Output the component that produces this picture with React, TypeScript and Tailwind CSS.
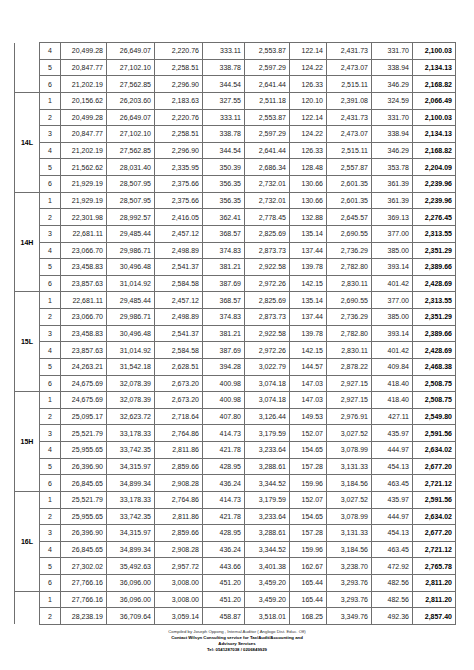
import React from 'react';

type Row = [string, string[]];
type Group = { label: string; rows: Row[] };

const r = (n: string, line: string): Row => [n, line.split(' ')];

const groups: Group[] = [
  {
    label: '',
    rows: [
      r('4', '20,499.28 26,649.07 2,220.76 333.11 2,553.87 122.14 2,431.73 331.70 2,100.03'),
      r('5', '20,847.77 27,102.10 2,258.51 338.78 2,597.29 124.22 2,473.07 338.94 2,134.13'),
      r('6', '21,202.19 27,562.85 2,296.90 344.54 2,641.44 126.33 2,515.11 346.29 2,168.82'),
    ],
  },
  {
    label: '14L',
    rows: [
      r('1', '20,156.62 26,203.60 2,183.63 327.55 2,511.18 120.10 2,391.08 324.59 2,066.49'),
      r('2', '20,499.28 26,649.07 2,220.76 333.11 2,553.87 122.14 2,431.73 331.70 2,100.03'),
      r('3', '20,847.77 27,102.10 2,258.51 338.78 2,597.29 124.22 2,473.07 338.94 2,134.13'),
      r('4', '21,202.19 27,562.85 2,296.90 344.54 2,641.44 126.33 2,515.11 346.29 2,168.82'),
      r('5', '21,562.62 28,031.40 2,335.95 350.39 2,686.34 128.48 2,557.87 353.78 2,204.09'),
      r('6', '21,929.19 28,507.95 2,375.66 356.35 2,732.01 130.66 2,601.35 361.39 2,239.96'),
    ],
  },
  {
    label: '14H',
    rows: [
      r('1', '21,929.19 28,507.95 2,375.66 356.35 2,732.01 130.66 2,601.35 361.39 2,239.96'),
      r('2', '22,301.98 28,992.57 2,416.05 362.41 2,778.45 132.88 2,645.57 369.13 2,276.45'),
      r('3', '22,681.11 29,485.44 2,457.12 368.57 2,825.69 135.14 2,690.55 377.00 2,313.55'),
      r('4', '23,066.70 29,986.71 2,498.89 374.83 2,873.73 137.44 2,736.29 385.00 2,351.29'),
      r('5', '23,458.83 30,496.48 2,541.37 381.21 2,922.58 139.78 2,782.80 393.14 2,389.66'),
      r('6', '23,857.63 31,014.92 2,584.58 387.69 2,972.26 142.15 2,830.11 401.42 2,428.69'),
    ],
  },
  {
    label: '15L',
    rows: [
      r('1', '22,681.11 29,485.44 2,457.12 368.57 2,825.69 135.14 2,690.55 377.00 2,313.55'),
      r('2', '23,066.70 29,986.71 2,498.89 374.83 2,873.73 137.44 2,736.29 385.00 2,351.29'),
      r('3', '23,458.83 30,496.48 2,541.37 381.21 2,922.58 139.78 2,782.80 393.14 2,389.66'),
      r('4', '23,857.63 31,014.92 2,584.58 387.69 2,972.26 142.15 2,830.11 401.42 2,428.69'),
      r('5', '24,263.21 31,542.18 2,628.51 394.28 3,022.79 144.57 2,878.22 409.84 2,468.38'),
      r('6', '24,675.69 32,078.39 2,673.20 400.98 3,074.18 147.03 2,927.15 418.40 2,508.75'),
    ],
  },
  {
    label: '15H',
    rows: [
      r('1', '24,675.69 32,078.39 2,673.20 400.98 3,074.18 147.03 2,927.15 418.40 2,508.75'),
      r('2', '25,095.17 32,623.72 2,718.64 407.80 3,126.44 149.53 2,976.91 427.11 2,549.80'),
      r('3', '25,521.79 33,178.33 2,764.86 414.73 3,179.59 152.07 3,027.52 435.97 2,591.56'),
      r('4', '25,955.65 33,742.35 2,811.86 421.78 3,233.64 154.65 3,078.99 444.97 2,634.02'),
      r('5', '26,396.90 34,315.97 2,859.66 428.95 3,288.61 157.28 3,131.33 454.13 2,677.20'),
      r('6', '26,845.65 34,899.34 2,908.28 436.24 3,344.52 159.96 3,184.56 463.45 2,721.12'),
    ],
  },
  {
    label: '16L',
    rows: [
      r('1', '25,521.79 33,178.33 2,764.86 414.73 3,179.59 152.07 3,027.52 435.97 2,591.56'),
      r('2', '25,955.65 33,742.35 2,811.86 421.78 3,233.64 154.65 3,078.99 444.97 2,634.02'),
      r('3', '26,396.90 34,315.97 2,859.66 428.95 3,288.61 157.28 3,131.33 454.13 2,677.20'),
      r('4', '26,845.65 34,899.34 2,908.28 436.24 3,344.52 159.96 3,184.56 463.45 2,721.12'),
      r('5', '27,302.02 35,492.63 2,957.72 443.66 3,401.38 162.67 3,238.70 472.92 2,765.78'),
      r('6', '27,766.16 36,096.00 3,008.00 451.20 3,459.20 165.44 3,293.76 482.56 2,811.20'),
    ],
  },
  {
    label: '',
    rows: [
      r('1', '27,766.16 36,096.00 3,008.00 451.20 3,459.20 165.44 3,293.76 482.56 2,811.20'),
      r('2', '28,238.19 36,709.64 3,059.14 458.87 3,518.01 168.25 3,349.76 492.36 2,857.40'),
    ],
  },
];

const widths = [25, 21, 46, 48, 48, 42, 45, 37, 45, 41, 43];

export default function App() {
  return (
    <div className="w-[474px] h-[670px] bg-white pt-[42px] pl-[14px] font-['Liberation_Sans',Arial,sans-serif] text-[#1c1c1c]">
      <table className="border-collapse table-fixed w-[441px] text-[7px] leading-none">
        <colgroup>
          {widths.map((w, i) => (
            <col key={i} style={{ width: w }} />
          ))}
        </colgroup>
        <tbody>
          {groups.map((g, gi) =>
            g.rows.map(([n, vals], ri) => (
              <tr key={`${gi}-${ri}`} className="h-[16.63px]">
                {ri === 0 && (
                  <td
                    rowSpan={g.rows.length}
                    className={`border-l border-[#6f6f6f] text-center align-middle font-bold text-black ${
                      gi === 0 ? '' : 'border-t'
                    }`}
                  >
                    {g.label}
                  </td>
                )}
                <td className="border border-[#6f6f6f] text-center">{n}</td>
                {vals.map((v, vi) => (
                  <td
                    key={vi}
                    className={`border border-[#6f6f6f] text-right pr-[3px] ${
                      vi === vals.length - 1 ? 'font-bold text-black' : ''
                    }`}
                  >
                    {v}
                  </td>
                ))}
              </tr>
            ))
          )}
        </tbody>
      </table>
      <div className="w-[446px] mt-[4px] flex flex-col items-center text-[4.3px] leading-[6px] text-[#333]">
        <div>Compiled by Joseph Oppong , Internal Auditor ( Anglogo Dist. Educ. Off)</div>
        <div className="font-bold text-black">Contact Wilsyn Consulting service for Tax/Audit/Accounting and</div>
        <div className="font-bold text-black">Advisory Services</div>
        <div className="font-bold text-black">Tel: 0541287038 / 0206849929</div>
      </div>
    </div>
  );
}
